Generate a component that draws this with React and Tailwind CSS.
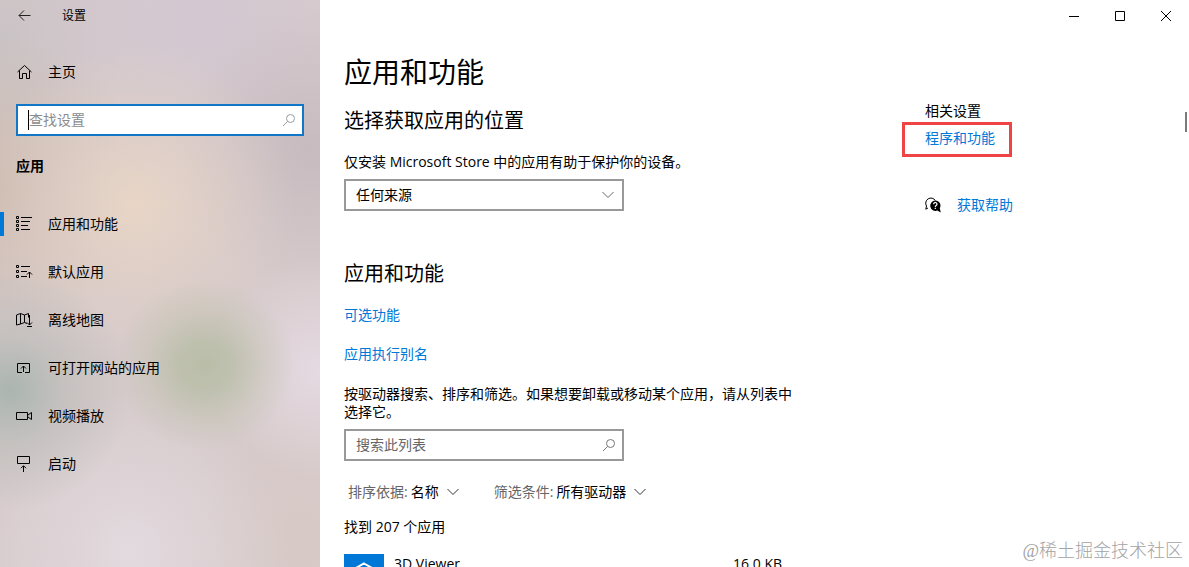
import React from "react";

const ListIcon = () => (
  <svg width="17" height="16" viewBox="0 0 17 16" fill="none" stroke="#000">
    <path d="M.5.5h2v2h-2zM.5 4.5h2v2h-2zM.5 8.5h2v2h-2zM.5 12.500h2v2h-2z" />
    <path d="M5 1.500h11M5 5.500h9M5 9.500h7M5 13.500h9" />
  </svg>
);

const DefaultsIcon = () => (
  <svg width="17" height="16" viewBox="0 0 17 16" fill="none" stroke="#000">
    <path d="M.5 1.500h2v2h-2zM.5 6.500h2v2h-2zM.5 11.500h2v2h-2zM5 2.500h9M5 7.500h6M5 12.500h6M13.500 14V8M11 10.500l2.500-2.500L16 10.500" />
  </svg>
);

const MapIcon = () => (
  <svg width="17" height="16" viewBox="0 0 17 16" fill="none" stroke="#000">
    <path d="M11 11.500L8.500 10.500l-4 1.500-4 1V3l4-1.500 4 1.500 4-1.500v4M4.500 1.500V12M8.500 3v7.500M13.500 3v10M11 10.500l2.500 2.500 2.500-2.500M11 14.500h5" />
  </svg>
);

const WebAppIcon = () => (
  <svg width="17" height="16" viewBox="0 0 17 16" fill="none" stroke="#000">
    <path d="M6 12.500H1.500v-9h12v9H9M7.500 12V6M5 8.500L7.500 6 10 8.500" />
  </svg>
);

const VideoIcon = () => (
  <svg width="17" height="16" viewBox="0 0 17 16" fill="none" stroke="#000">
    <path d="M.5 4.500h11v7H.5zM12 7l3.500-2.500v7L12 9" />
  </svg>
);

const StartupIcon = () => (
  <svg width="17" height="16" viewBox="0 0 17 16" fill="none" stroke="#000">
    <path d="M1.500.5h12v7h-12zM7.500 16v-6M5 12.200L7.500 9.700l2.500 2.500" />
  </svg>
);

const SearchIcon = ({ className }) => (
  <svg className={className} width="14" height="14" viewBox="0 0 14 14" fill="none" stroke="currentColor">
    <circle cx="8.500" cy="5.500" r="4" />
    <path d="M5.600 8.400L1 13" />
  </svg>
);

const Chevron = ({ className }) => (
  <svg className={className} width="12" height="8" viewBox="0 0 12 8" fill="none" stroke="currentColor">
    <path d="M.5 1L6 6.500 11.500 1" />
  </svg>
);

const HelpIcon = () => (
  <svg width="16" height="17" viewBox="0 0 16 17" fill="none">
    <path d="M3 11L.8 12.200l.7-3.200A5 5 0 1 1 10.300 3.500" stroke="#000" />
    <path d="M10.300 3.500a5.200 5.200 0 0 1 4.500 7.800l1 4.200-3.600-1.900A5.200 5.200 0 1 1 10.300 3.500z" fill="#000" />
    <path d="M8.600 7.200a1.700 1.700 0 1 1 2.600 1.400c-.6.4-.9.600-.9 1.300M10.300 10.800V12" stroke="#fff" strokeWidth="1.200" />
  </svg>
);

const navItems = [
  { label: "应用和功能", icon: <ListIcon />, active: true },
  { label: "默认应用", icon: <DefaultsIcon /> },
  { label: "离线地图", icon: <MapIcon /> },
  { label: "可打开网站的应用", icon: <WebAppIcon /> },
  { label: "视频播放", icon: <VideoIcon /> },
  { label: "启动", icon: <StartupIcon /> },
];

const Sidebar = () => {
  return (
    <aside className="w-80 shrink-0 bg-[#d6cacb] bg-[radial-gradient(ellipse_90px_85px_at_205px_365px,#b9bea8_0,#b9bea8cc_30%,#c3c3b277_65%,transparent_100%),radial-gradient(circle_at_10px_390px,#abb5b0_0,#b7bab688_55px,transparent_120px),radial-gradient(circle_at_135px_205px,#e8d5c6_0,#e3d2c688_80px,transparent_160px),radial-gradient(circle_at_320px_370px,#e5dae2_0,transparent_110px),radial-gradient(circle_at_310px_150px,#c7bbc0_0,transparent_140px),radial-gradient(circle_at_0px_190px,#cdbbb0_0,transparent_150px),radial-gradient(circle_at_200px_20px,#d3c8d2_0,transparent_180px),radial-gradient(circle_at_130px_550px,#e3dadf_0,transparent_160px),radial-gradient(circle_at_0px_40px,#cac3c5_0,transparent_160px),radial-gradient(circle_at_300px_540px,#d7c9c5_0,transparent_140px)]">
      <div className="h-8 flex items-center">
        <button className="w-12 h-8 flex items-center justify-center" aria-label="返回">
          <svg width="13" height="12" viewBox="0 0 13 12" fill="none" stroke="#222">
            <path d="M12.500 5.500H1M6 .5l-5 5 5 5" />
          </svg>
        </button>
        <span className="ml-3.5 text-xs">设置</span>
      </div>
      <button className="mt-4 h-12 w-full flex items-center gap-4 px-4">
        <svg width="16" height="16" viewBox="0 0 16 16" fill="none" stroke="#000">
          <path d="M1.500 8L8.500 1.500 15.500 8M3.500 6.500v8h3v-5h4v5h3v-8" />
        </svg>
        <span>主页</span>
      </button>
      <div className="mx-4 mt-2 h-8 flex items-center border-2 border-[#0f76c8] bg-white px-2">
        <span className="w-px h-5 ml-0.5 bg-black" />
        <input aria-label="查找设置" placeholder="查找设置" className="flex-1 min-w-0 outline-none placeholder:text-[#8c8c8c]" />
        <SearchIcon className="text-[#9a9a9a] -mr-0.5" />
      </div>
      <h2 className="mt-5 px-4 font-bold">应用</h2>
      <nav className="mt-6">
        {navItems.map((item) => (
          <a key={item.label} href="#" className="h-12 flex items-center">
            <span className={item.active ? "w-1 h-6 bg-[#0078d7]" : "w-1 h-6"} />
            <span className="ml-3 mr-4 w-4">{item.icon}</span>
            <span>{item.label}</span>
          </a>
        ))}
      </nav>
    </aside>
  );
};

const WindowButtons = () => {
  return (
    <div className="h-8 flex justify-end">
      <button className="w-[46px] flex items-center justify-center" aria-label="最小化">
        <svg width="10" height="10" viewBox="0 0 10 10" stroke="#000">
          <path d="M0 5.500h10" />
        </svg>
      </button>
      <button className="w-[46px] flex items-center justify-center" aria-label="最大化">
        <svg width="10" height="10" viewBox="0 0 10 10" fill="none" stroke="#000">
          <path d="M.5.500h9v9h-9z" />
        </svg>
      </button>
      <button className="w-[46px] flex items-center justify-center" aria-label="关闭">
        <svg width="10" height="10" viewBox="0 0 10 10" stroke="#000">
          <path d="M0 0l10 10M10 0L0 10" />
        </svg>
      </button>
    </div>
  );
};

const AppsPanel = () => {
  return (
    <div className="w-[448px] shrink-0">
      <h1 className="text-[28px] leading-9">应用和功能</h1>
      <h2 className="mt-[17px] text-xl leading-7">选择获取应用的位置</h2>
      <label htmlFor="source" className="block mt-[17px]">
        仅安装 Microsoft Store 中的应用有助于保护你的设备。
      </label>
      <div className="mt-[7px] w-[280px] h-8 grid items-center border-2 border-[#999]">
        <select id="source" className="row-start-1 col-start-1 h-full px-2.5 appearance-none">
          <option>任何来源</option>
        </select>
        <Chevron className="row-start-1 col-start-1 justify-self-end mr-2 text-[#666] pointer-events-none" />
      </div>

      <h2 className="mt-[49px] text-xl leading-7">应用和功能</h2>
      <a href="#" className="block w-fit mt-[17px] text-[#0078d7]">可选功能</a>
      <a href="#" className="block w-fit mt-[19px] text-[#0078d7]">应用执行别名</a>
      <p className="mt-[21px] leading-[18px]">
        按驱动器搜索、排序和筛选。如果想要卸载或移动某个应用，请从列表中选择它。
      </p>
      <div className="mt-2 w-[280px] h-8 flex items-center border-2 border-[#999] px-2.5">
        <input aria-label="搜索此列表" placeholder="搜索此列表" className="flex-1 min-w-0 outline-none placeholder:text-[#666]" />
        <SearchIcon className="text-[#777] -mr-1" />
      </div>

      <div className="mt-[21px] flex gap-[35px] pl-1">
        <div className="flex items-center">
          <label htmlFor="sort" className="text-[#666]">排序依据:</label>
          <select id="sort" className="ml-[3px] appearance-none">
            <option>名称</option>
          </select>
          <Chevron className="ml-2 text-[#333]" />
        </div>
        <div className="flex items-center">
          <label htmlFor="filter" className="text-[#666]">筛选条件:</label>
          <select id="filter" className="ml-[3px] appearance-none">
            <option>所有驱动器</option>
          </select>
          <Chevron className="ml-2 text-[#333]" />
        </div>
      </div>
      <p className="mt-[15px]">找到 207 个应用</p>

      <div className="mt-[17px] flex">
        <div className="size-10 bg-[#0078d7] flex justify-center pt-2">
          <svg width="24" height="24" viewBox="0 0 24 24" fill="none" stroke="#fff" strokeWidth="2">
            <path d="M12 1.500l9 5v11l-9 5-9-5v-11zM3 6.500l9 5 9-5M12 11.500v11" />
          </svg>
        </div>
        <span className="ml-2.5">3D Viewer</span>
        <span className="ml-auto mr-2.5">16.0 KB</span>
      </div>
    </div>
  );
};

const RelatedPanel = () => {
  return (
    <div className="ml-[133px] mt-[47px] shrink-0">
      <h3>相关设置</h3>
      <div className="relative mt-[7px] w-fit">
        <a href="#" className="block text-[#0078d7]">程序和功能</a>
        <span className="absolute -left-[23px] -right-[17px] -top-[6px] -bottom-[9px] border-3 border-[#ee4444] pointer-events-none" />
      </div>
      <a href="#" className="mt-[47px] flex items-center gap-4 text-[#0078d7]">
        <HelpIcon />
        获取帮助
      </a>
    </div>
  );
};

const App = () => {
  return (
    <div className="relative h-screen flex overflow-hidden bg-white text-black text-sm leading-5 font-['Open_Sans','Noto_Sans_CJK_SC',sans-serif]">
      <Sidebar />
      <main className="flex-1 min-w-0">
        <WindowButtons />
        <div className="mt-[22px] pl-6 flex items-start">
          <AppsPanel />
          <RelatedPanel />
        </div>
      </main>
      <div className="absolute right-0.5 top-28 w-0.5 h-5 bg-[#7a7a7a]" />
      <div className="absolute right-1.5 bottom-1 text-lg leading-6 font-light text-[#a3a3a3] font-['Liberation_Serif','Noto_Sans_CJK_SC',serif]">
        @稀土掘金技术社区
      </div>
    </div>
  );
};

export default App;
